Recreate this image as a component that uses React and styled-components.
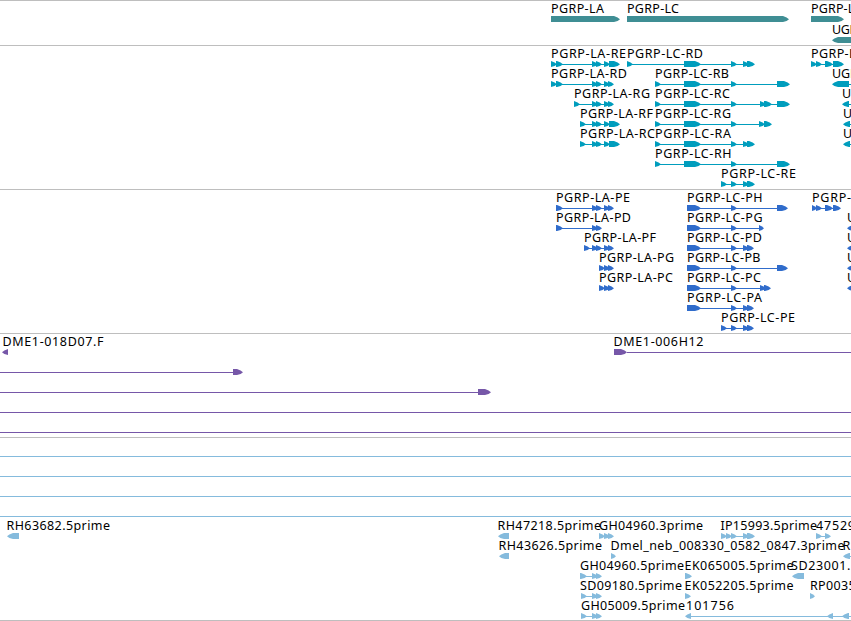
import styled, { createGlobalStyle } from "styled-components";

const GlobalStyle = createGlobalStyle`
  body {
    margin: 0;
    background: #fff;
    overflow: hidden;
  }
`;

const Browser = styled.main`
  display: flex;
  flex-direction: column;
  width: 851px;
  height: 621px;
  overflow: hidden;
  box-sizing: border-box;
  border-bottom: 1px solid #bebebe;
`;

const Track = styled.section`
  display: flex;
  flex-direction: column;
  box-sizing: border-box;
  flex: 0 0 ${(props) => props.$height}px;
  border-top: 1px solid #bebebe;
  color: ${(props) => props.$color};
`;

const Lane = styled.svg`
  display: block;
  flex: none;
  width: 851px;
  height: ${(props) => props.$height}px;
  overflow: visible;
`;

const Label = styled.text`
  fill: #000;
  font-family: "Noto Sans", "DejaVu Sans", sans-serif;
  font-size: 12.5px;
`;

const Block = styled.polygon`
  fill: currentColor;
`;

const Intron = styled.rect`
  fill: currentColor;
`;

// exon blocks shared by the splice variants
const LA_START = [[551, 557], [556, 563]];
const LA_MID = [[592, 598], [596, 602]];
const LA_END = [[604, 610], [608, 614]];
const LA_LONG = [[604, 610], [609, 620]];
const LC_START = [[655, 661], [684, 701], [731, 737]];
const LC_END = [[743, 749], [747, 755]];
const LCP = [[687, 701], [731, 737]];
const LCP_END = [[743, 749], [747, 754]];

// f(label, label x, label width, blocks, options)
const f = (label, x, width, blocks, opts = {}) => ({ label, x, width, blocks, ...opts });
const rev = { reverse: true };

const tracks = [
  {
    name: "genes",
    color: "#3f8e94",
    height: 45,
    lane: 21,
    rows: [
      [
        f("PGRP-LA", 551, 53, [[551, 620]]),
        f("PGRP-LC", 627, 52, [[627, 789]]),
        f("PGRP-LF", 811, 50, [[811, 844]]),
      ],
      [f("UGP", 832, 25, [[832, 870]], rev)],
    ],
  },
  {
    name: "transcripts",
    color: "#009dbd",
    height: 144,
    lane: 20,
    rows: [
      [
        f("PGRP-LA-RE", 551, 75, [...LA_START, ...LA_MID, ...LA_LONG]),
        f("PGRP-LC-RD", 627, 76, [[627, 633], [684, 701], [731, 737], ...LC_END]),
        f("PGRP-LF-RA", 811, 72.5, [[811, 817], [816, 822], [825, 833], [833, 844]]),
      ],
      [
        f("PGRP-LA-RD", 551, 76, [...LA_START, ...LA_MID, ...LA_END]),
        f("PGRP-LC-RB", 655, 74, [...LC_START, [777, 790]]),
        f("UGP-RA", 832, 45, [[832, 849], [860, 870]], rev),
      ],
      [
        f("PGRP-LA-RG", 574, 76, [[574, 580], ...LA_MID, ...LA_END]),
        f("PGRP-LC-RC", 655, 75, [...LC_START, [760, 766], [764, 772], [777, 790]]),
        f("UGP-RB", 842, 48, [[842, 849], [860, 870]], rev),
      ],
      [
        f("PGRP-LA-RF", 580, 73, [[580, 586], ...LA_MID, ...LA_LONG]),
        f("PGRP-LC-RG", 655, 76, [...LC_START, [759, 765], [764, 772]]),
        f("UGP-RC", 843, 48, [[843, 850], [860, 870]], rev),
      ],
      [
        f("PGRP-LA-RC", 580, 75, [[580, 586], ...LA_MID, ...LA_LONG]),
        f("PGRP-LC-RA", 655, 76, [...LC_START, ...LC_END]),
        f("UGP-RD", 843, 48, [[843, 850], [860, 870]], rev),
      ],
      [f("PGRP-LC-RH", 655, 76.5, [...LC_START, [777, 790]])],
      [f("PGRP-LC-RE", 721, 75, [[721, 727], [731, 737], ...LC_END])],
    ],
  },
  {
    name: "proteins",
    color: "#306ccb",
    height: 144,
    lane: 20,
    rows: [
      [
        f("PGRP-LA-PE", 556, 74, [[556, 563], ...LA_MID, ...LA_END]),
        f("PGRP-LC-PH", 687, 75.5, [...LCP, [777, 788]]),
        f("PGRP-LF-PA", 812, 75, [[812, 817], [816, 822], [825, 833], [833, 841]]),
      ],
      [
        f("PGRP-LA-PD", 556, 75, [[556, 563], ...LA_MID]),
        f("PGRP-LC-PG", 687, 75.5, [...LCP, [759, 764]]),
        f("UGP-PA", 847, 48, [[847, 855], [860, 870]], rev),
      ],
      [
        f("PGRP-LA-PF", 584, 72, [[584, 590], ...LA_MID, ...LA_END]),
        f("PGRP-LC-PD", 687, 75, [...LCP, ...LCP_END]),
        f("UGP-PB", 847, 48, [[847, 855], [860, 870]], rev),
      ],
      [
        f("PGRP-LA-PG", 599, 75, [[599, 605], ...LA_END]),
        f("PGRP-LC-PB", 687, 73.5, [...LCP, [777, 788]]),
        f("UGP-PC", 847, 48, [[847, 855], [860, 870]], rev),
      ],
      [
        f("PGRP-LA-PC", 599, 74, [[599, 605], ...LA_END]),
        f("PGRP-LC-PC", 687, 74, [...LCP, [760, 766], [764, 771]]),
        f("UGP-PD", 847, 48, [[847, 855], [860, 870]], rev),
      ],
      [f("PGRP-LC-PA", 687, 75, [...LCP, ...LCP_END])],
      [f("PGRP-LC-PE", 721, 74, [[721, 727], [731, 737], ...LCP_END])],
    ],
  },
  {
    name: "clones",
    color: "#7657a8",
    height: 104,
    lane: 20,
    rows: [
      [
        f("DME1-018D07.F", 2.5, 101, [[2, 8]], rev),
        f("DME1-006H12", 613.5, 90, [[614, 627]], { line: [627, 851] }),
      ],
      [f("", 0, 0, [[233, 243]], { line: [0, 233] })],
      [f("", 0, 0, [[478, 491]], { line: [0, 478] })],
      [f("", 0, 0, [], { line: [0, 851] })],
      [f("", 0, 0, [], { line: [0, 851] })],
    ],
  },
  {
    name: "ests",
    color: "#85bbdd",
    height: 183,
    lane: 20,
    rows: [
      [f("", 0, 0, [], { line: [0, 851] })],
      [f("", 0, 0, [], { line: [0, 851] })],
      [f("", 0, 0, [], { line: [0, 851] })],
      [f("", 0, 0, [], { line: [0, 851] })],
      [
        f("RH63682.5prime", 6.5, 103.5, [[7, 19]], rev),
        f("RH47218.5prime", 497.5, 103.5, [[498, 509]], rev),
        f("GH04960.3prime", 599, 104, [[599, 605], [604, 610], [608, 614]]),
        f("IP15993.5prime", 720.5, 96.5, [[721, 727], [726, 732], [731, 737], [743, 749], [747, 755]]),
        f("47529", 816, 39, [[816, 822], [825, 831]]),
      ],
      [
        f("RH43626.5prime", 498.5, 103.5, [[499, 509]], rev),
        f("Dmel_neb_008330_0582_0847.3prime", 610.5, 234, [[611, 616]]),
        f("RE", 842.5, 18, [[843, 850], [860, 870]], rev),
      ],
      [
        f("GH04960.5prime", 580, 104, [[580, 587], [592, 598], [596, 602]]),
        f("EK065005.5prime", 684.5, 109, [[685, 692]]),
        f("SD23001.5prime", 791, 105, [[792, 804]], rev),
      ],
      [
        f("SD09180.5prime", 580, 102, [[581, 587], [592, 598], [596, 602]]),
        f("EK052205.5prime", 684.5, 109, [[685, 691]]),
        f("RP00358", 810, 53, [[810, 815]]),
      ],
      [
        f("GH05009.5prime", 581, 104, [[581, 587], [592, 598], [596, 602]]),
        f("101756", 686, 48, [[685, 691], [827, 833], [842, 849], [860, 870]], rev),
      ],
    ],
  },
];

// the head bulges a little before it closes on the tip
const arrowPoints = ([start, end], reverse) => {
  const size = Math.min(6, end - start);
  const [base, tip, dir] = reverse ? [end, start, -1] : [start, end, 1];
  const neck = tip - dir * size;
  const bulge = tip - dir * size * 0.4;
  return `${base},15 ${neck},15 ${bulge},16.4 ${tip},18.2 ${bulge},20 ${neck},21 ${base},21`;
};

const Feature = ({ label, x, width, blocks, reverse, line }) => {
  const span = line || [blocks[0][0] + 3, blocks[blocks.length - 1][1] - 3];
  const showLine = line || blocks.length > 1;
  return (
    <g>
      {showLine && <Intron x={span[0]} y={18} width={span[1] - span[0]} height={1} />}
      {blocks.map((block) => (
        <Block key={block[0]} points={arrowPoints(block, reverse)} />
      ))}
      {label && (
        <Label x={x} y={12} textLength={width}>
          {label}
        </Label>
      )}
    </g>
  );
};

export default function App() {
  return (
    <>
      <GlobalStyle />
      <Browser>
        {tracks.map((track) => (
          <Track key={track.name} $height={track.height} $color={track.color}>
            {track.rows.map((row, i) => (
              <Lane key={i} $height={track.lane}>
                {row.map((feature, n) => (
                  <Feature key={n} {...feature} />
                ))}
              </Lane>
            ))}
          </Track>
        ))}
      </Browser>
    </>
  );
}
